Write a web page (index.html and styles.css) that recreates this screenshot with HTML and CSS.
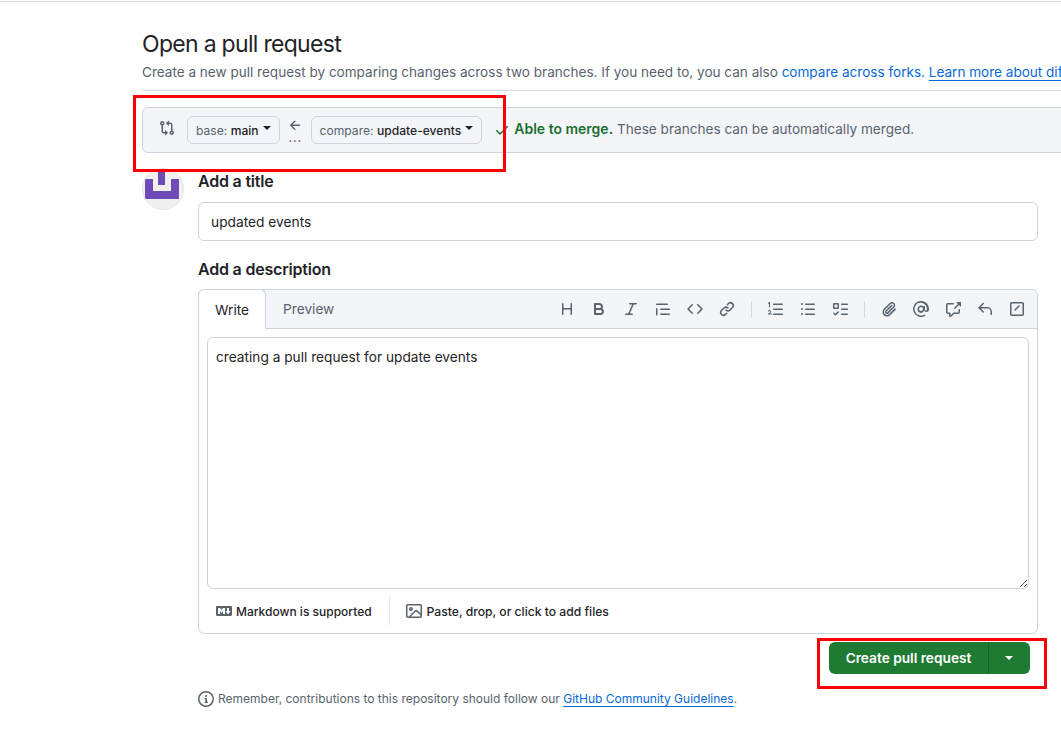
FILE: index.html
```html
<!DOCTYPE html>
<html lang="en">

<head>
    <meta charset="UTF-8">
    <meta name="viewport" content="width=device-width, initial-scale=1.0">
    <title>Open a pull request</title>
    <link rel="stylesheet" href="styles.css">
</head>

<body>
    <svg class="sprite" xmlns="http://www.w3.org/2000/svg">
        <symbol id="i-compare" viewBox="0 0 16 16"><path d="M9.573.677A.25.25 0 0 1 10 .854V2.5h1A2.5 2.5 0 0 1 13.5 5v5.628a2.251 2.251 0 1 1-1.5 0V5a1 1 0 0 0-1-1h-1v1.646a.25.25 0 0 1-.427.177L7.177 3.427a.25.25 0 0 1 0-.354ZM6 12v-1.646a.25.25 0 0 1 .427-.177l2.396 2.396a.25.25 0 0 1 0 .354l-2.396 2.396A.25.25 0 0 1 6 15.146V13.5H5A2.5 2.5 0 0 1 2.5 11V5.372a2.25 2.25 0 1 1 1.5 0V11a1 1 0 0 0 1 1ZM4 3.25a.75.75 0 1 0-1.5 0 .75.75 0 0 0 1.5 0ZM12.75 12a.75.75 0 1 0 0 1.5.75.75 0 0 0 0-1.5Z"/></symbol>
        <symbol id="i-arrow" viewBox="0 0 16 16"><path d="M7.78 12.53a.75.75 0 0 1-1.06 0L2.47 8.28a.75.75 0 0 1 0-1.06l4.25-4.25a.751.751 0 0 1 1.042.018.751.751 0 0 1 .018 1.042L4.81 7h7.44a.75.75 0 0 1 0 1.5H4.81l2.97 2.97a.75.75 0 0 1 0 1.06Z"/></symbol>
        <symbol id="i-check" viewBox="0 0 16 16"><path d="M13.78 4.22a.75.75 0 0 1 0 1.06l-7.25 7.25a.75.75 0 0 1-1.06 0L2.22 9.28a.751.751 0 0 1 .018-1.042.751.751 0 0 1 1.042-.018L6 10.94l6.72-6.72a.75.75 0 0 1 1.06 0Z"/></symbol>
        <symbol id="i-heading" viewBox="0 0 16 16"><path d="M3.75 2a.75.75 0 0 1 .75.75V7h7V2.75a.75.75 0 0 1 1.5 0v10.5a.75.75 0 0 1-1.5 0V8.5h-7v4.75a.75.75 0 0 1-1.5 0V2.75A.75.75 0 0 1 3.75 2Z"/></symbol>
        <symbol id="i-bold" viewBox="0 0 16 16"><path d="M4 2h4.5a3.501 3.501 0 0 1 2.852 5.53A3.499 3.499 0 0 1 9.5 14H4a1 1 0 0 1-1-1V3a1 1 0 0 1 1-1Zm1 7v3h4.5a1.5 1.5 0 0 0 0-3Zm3.5-2a1.5 1.5 0 0 0 0-3H5v3Z"/></symbol>
        <symbol id="i-italic" viewBox="0 0 16 16"><path d="M6 2.75A.75.75 0 0 1 6.75 2h6.5a.75.75 0 0 1 0 1.5h-2.505l-3.858 9H9.25a.75.75 0 0 1 0 1.5h-6.5a.75.75 0 0 1 0-1.5h2.505l3.858-9H6.75A.75.75 0 0 1 6 2.75Z"/></symbol>
        <symbol id="i-quote" viewBox="0 0 16 16"><path d="M1.75 2.5h10.5a.75.75 0 0 1 0 1.5H1.75a.75.75 0 0 1 0-1.5Zm4 5h8.5a.75.75 0 0 1 0 1.5h-8.5a.75.75 0 0 1 0-1.5Zm0 5h8.5a.75.75 0 0 1 0 1.5h-8.5a.75.75 0 0 1 0-1.5ZM2.5 7.75v6a.75.75 0 0 1-1.5 0v-6a.75.75 0 0 1 1.5 0Z"/></symbol>
        <symbol id="i-code" viewBox="0 0 16 16"><path d="m11.28 3.22 4.25 4.25a.75.75 0 0 1 0 1.06l-4.25 4.25a.749.749 0 0 1-1.275-.326.749.749 0 0 1 .215-.734L13.94 8l-3.72-3.72a.749.749 0 0 1 .326-1.275.749.749 0 0 1 .734.215Zm-6.56 0a.751.751 0 0 1 1.042.018.751.751 0 0 1 .018 1.042L2.06 8l3.72 3.72a.749.749 0 0 1-.326 1.275.749.749 0 0 1-.734-.215L.47 8.53a.75.75 0 0 1 0-1.06Z"/></symbol>
        <symbol id="i-link" viewBox="0 0 16 16"><path d="m7.775 3.275 1.25-1.25a3.5 3.5 0 1 1 4.95 4.95l-2.5 2.5a3.5 3.5 0 0 1-4.95 0 .751.751 0 0 1 .018-1.042.751.751 0 0 1 1.042-.018 1.998 1.998 0 0 0 2.83 0l2.5-2.5a2.002 2.002 0 0 0-2.83-2.83l-1.25 1.25a.751.751 0 0 1-1.042-.018.751.751 0 0 1-.018-1.042Zm-4.69 9.64a1.998 1.998 0 0 0 2.83 0l1.25-1.25a.751.751 0 0 1 1.042.018.751.751 0 0 1 .018 1.042l-1.25 1.25a3.5 3.5 0 1 1-4.95-4.95l2.5-2.5a3.5 3.5 0 0 1 4.95 0 .751.751 0 0 1-.018 1.042.751.751 0 0 1-1.042.018 1.998 1.998 0 0 0-2.83 0l-2.5 2.5a1.998 1.998 0 0 0 0 2.83Z"/></symbol>
        <symbol id="i-ordered" viewBox="0 0 16 16"><path d="M5 3.25a.75.75 0 0 1 .75-.75h8.5a.75.75 0 0 1 0 1.5h-8.5A.75.75 0 0 1 5 3.25Zm0 5a.75.75 0 0 1 .75-.75h8.5a.75.75 0 0 1 0 1.5h-8.5A.75.75 0 0 1 5 8.25Zm0 5a.75.75 0 0 1 .75-.75h8.5a.75.75 0 0 1 0 1.5h-8.5a.75.75 0 0 1-.75-.75ZM.924 10.32a.5.5 0 0 1-.851-.525c.097-.144.215-.273.35-.383.263-.213.646-.393 1.16-.393.52 0 .95.31 1.162.522.25.28.393.65.393 1.037 0 .44-.18.86-.504 1.161L1.8 12.5h1.7a.5.5 0 0 1 0 1H.5a.5.5 0 0 1-.3-.9l1.96-1.47a.6.6 0 0 0 .168-.42.6.6 0 0 0-.169-.42.6.6 0 0 0-.45-.19c-.26 0-.4.08-.5.16a1.1 1.1 0 0 0-.285.36ZM2 1.5V6a.5.5 0 0 1-1 0V2.4l-.5.3A.5.5 0 0 1 0 1.8l1.2-.75A.5.5 0 0 1 2 1.5Z"/></symbol>
        <symbol id="i-unordered" viewBox="0 0 16 16"><path d="M5.75 2.5h8.5a.75.75 0 0 1 0 1.5h-8.5a.75.75 0 0 1 0-1.5Zm0 5h8.5a.75.75 0 0 1 0 1.5h-8.5a.75.75 0 0 1 0-1.5Zm0 5h8.5a.75.75 0 0 1 0 1.5h-8.5a.75.75 0 0 1 0-1.5ZM2 14a1 1 0 1 1 0-2 1 1 0 0 1 0 2Zm1-6a1 1 0 1 1-2 0 1 1 0 0 1 2 0ZM2 4a1 1 0 1 1 0-2 1 1 0 0 1 0 2Z"/></symbol>
        <symbol id="i-tasklist" viewBox="0 0 16 16"><path d="M2 2h4a1 1 0 0 1 1 1v4a1 1 0 0 1-1 1H2a1 1 0 0 1-1-1V3a1 1 0 0 1 1-1Zm4.655 8.595a.75.75 0 0 1 0 1.06L4.03 14.28a.75.75 0 0 1-1.06 0l-1.5-1.5a.749.749 0 0 1 .326-1.275.749.749 0 0 1 .734.215l.97.97 2.095-2.095a.75.75 0 0 1 1.06 0ZM9.75 2.5h5.5a.75.75 0 0 1 0 1.5h-5.5a.75.75 0 0 1 0-1.5Zm0 5h5.5a.75.75 0 0 1 0 1.5h-5.5a.75.75 0 0 1 0-1.5Zm0 5h5.5a.75.75 0 0 1 0 1.5h-5.5a.75.75 0 0 1 0-1.5Zm-7.25-9v3h3v-3Z"/></symbol>
        <symbol id="i-clip" viewBox="0 0 16 16"><path d="M12.212 3.02a1.753 1.753 0 0 0-2.478.003l-5.83 5.83a3.007 3.007 0 0 0-.88 2.127c0 .795.315 1.551.88 2.116.567.567 1.333.89 2.126.89.79 0 1.548-.321 2.116-.89l5.48-5.48a.75.75 0 0 1 1.061 1.06l-5.48 5.48a4.492 4.492 0 0 1-3.177 1.33c-1.2 0-2.345-.487-3.187-1.33a4.483 4.483 0 0 1-1.32-3.177c0-1.195.475-2.341 1.32-3.186l5.83-5.83a3.25 3.25 0 0 1 5.553 2.297c0 .863-.343 1.691-.953 2.301L7.439 12.39c-.375.377-.884.59-1.416.593a1.998 1.998 0 0 1-1.412-.593 1.992 1.992 0 0 1 0-2.828l5.48-5.48a.751.751 0 0 1 1.042.018.751.751 0 0 1 .018 1.042l-5.48 5.48a.492.492 0 0 0 0 .707.499.499 0 0 0 .706 0l5.833-5.833a1.755 1.755 0 0 0 .002-2.48Z"/></symbol>
        <symbol id="i-mention" viewBox="0 0 16 16"><path d="M4.75 2.37a6.501 6.501 0 0 0 6.5 11.26.75.75 0 0 1 .75 1.298A8.001 8.001 0 0 1 3.999 1.072 8.002 8.002 0 0 1 16 8v.5a2.5 2.5 0 0 1-4.747 1.093A3.498 3.498 0 0 1 4.5 8a3.5 3.5 0 0 1 6.031-2.415.75.75 0 0 1 1.469.207V8.5a1 1 0 0 0 2 0V8a6.5 6.5 0 0 0-9.25-5.63ZM8 6a2 2 0 1 0 0 4 2 2 0 0 0 0-4Z"/></symbol>
        <symbol id="i-ref" viewBox="0 0 16 16"><path d="M2.75 3.5a.25.25 0 0 0-.25.25v7.5c0 .138.112.25.25.25h2a.75.75 0 0 1 .75.75v2.19l2.72-2.72a.749.749 0 0 1 .53-.22h4.5a.25.25 0 0 0 .25-.25v-2.5a.75.75 0 0 1 1.5 0v2.5A1.75 1.75 0 0 1 13.25 13H9.06l-2.573 2.573A1.458 1.458 0 0 1 4 14.543V13H2.75A1.75 1.75 0 0 1 1 11.25v-7.5C1 2.784 1.784 2 2.75 2h5.5a.75.75 0 0 1 0 1.5ZM16 1.25v4.146a.25.25 0 0 1-.427.177L14.03 4.03l-3.75 3.75a.749.749 0 0 1-1.275-.326.749.749 0 0 1 .215-.734l3.75-3.75-1.543-1.543A.25.25 0 0 1 11.604 1h4.146a.25.25 0 0 1 .25.25Z"/></symbol>
        <symbol id="i-reply" viewBox="0 0 16 16"><path d="M6.78 1.97a.75.75 0 0 1 0 1.06L3.81 6h6.44A4.75 4.75 0 0 1 15 10.75v2.5a.75.75 0 0 1-1.5 0v-2.5a3.25 3.25 0 0 0-3.25-3.25H3.81l2.97 2.97a.749.749 0 0 1-.326 1.275.749.749 0 0 1-.734-.215L1.47 7.28a.75.75 0 0 1 0-1.06l4.25-4.25a.75.75 0 0 1 1.06 0Z"/></symbol>
        <symbol id="i-slash" viewBox="0 0 16 16"><path d="M2.75 1h10.5c.966 0 1.75.784 1.75 1.75v10.5A1.75 1.75 0 0 1 13.25 15H2.75A1.75 1.75 0 0 1 1 13.25V2.75C1 1.784 1.784 1 2.75 1Zm0 1.5a.25.25 0 0 0-.25.25v10.5c0 .138.112.25.25.25h10.5a.25.25 0 0 0 .25-.25V2.75a.25.25 0 0 0-.25-.25Zm7.78 3.03-4 4a.75.75 0 0 1-1.06-1.06l4-4a.75.75 0 0 1 1.06 1.06Z"/></symbol>
        <symbol id="i-markdown" viewBox="0 0 16 16"><path d="M14.85 3c.63 0 1.15.52 1.14 1.15v7.7c0 .63-.51 1.15-1.15 1.15H1.15C.52 13 0 12.48 0 11.84V4.15C0 3.52.52 3 1.15 3ZM9 11V5H7L5.5 7 4 5H2v6h2V8l1.5 1.92L7 8v3Zm2.99.5L14.5 8H13V5h-2v3H9.5Z"/></symbol>
        <symbol id="i-image" viewBox="0 0 16 16"><path d="M16 13.25A1.75 1.75 0 0 1 14.25 15H1.75A1.75 1.75 0 0 1 0 13.25V2.75C0 1.784.784 1 1.75 1h12.5c.966 0 1.75.784 1.75 1.75ZM1.75 2.5a.25.25 0 0 0-.25.25v10.5c0 .138.112.25.25.25h.94l.03-.03 6.077-6.078a1.75 1.75 0 0 1 2.412-.06L14.5 10.31V2.75a.25.25 0 0 0-.25-.25Zm12.5 11a.25.25 0 0 0 .25-.25v-.917l-4.298-3.889a.25.25 0 0 0-.344.009L4.81 13.5ZM7 6a2 2 0 1 1-3.999.001A2 2 0 0 1 7 6ZM5.5 6a.5.5 0 1 0-.999.001A.5.5 0 0 0 5.5 6Z"/></symbol>
        <symbol id="i-info" viewBox="0 0 16 16"><path d="M0 8a8 8 0 1 1 16 0A8 8 0 0 1 0 8Zm8-6.5a6.5 6.5 0 1 0 0 13 6.5 6.5 0 0 0 0-13ZM6.5 7.75A.75.75 0 0 1 7.25 7h1a.75.75 0 0 1 .75.75v2.75h.25a.75.75 0 0 1 0 1.5h-2a.75.75 0 0 1 0-1.5h.25v-2h-.25a.75.75 0 0 1-.75-.75ZM8 6a1 1 0 1 1 0-2 1 1 0 0 1 0 2Z"/></symbol>
    </svg>

    <main class="page">
        <header class="subhead">
            <h1>Open a pull request</h1>
            <p>Create a new pull request by comparing changes across two branches. If you need to, you can also <a href="#">compare across forks.</a> <a href="#" class="underlined">Learn more about dif</a></p>
        </header>

        <div class="range">
            <svg class="icon range-icon"><use href="#i-compare"/></svg>
            <button class="ref-btn" type="button"><span>base: <b>main</b></span><span class="caret"></span></button>
            <div class="range-arrow">
                <svg class="icon"><use href="#i-arrow"/></svg>
                <span>...</span>
            </div>
            <button class="ref-btn" type="button"><span>compare: <b>update-events</b></span><span class="caret"></span></button>
            <div class="merge">
                <svg class="icon"><use href="#i-check"/></svg>
                <span><b>Able to merge.</b> These branches can be automatically merged.</span>
            </div>
        </div>

        <div class="compose">
            <div class="avatar">
                <svg viewBox="0 0 42 42" width="42" height="42">
                    <path fill="#6f4bb8" d="M3 11h8v12h18V11h8v20H3ZM16 4h7v13h-7Z"/>
                </svg>
            </div>

            <form class="pr-form">
                <label class="field-label">Add a title</label>
                <div class="title-input">updated events</div>

                <label class="field-label desc-label">Add a description</label>
                <div class="editor">
                    <div class="editor-head">
                        <div class="tab active">Write</div>
                        <div class="tab tab-preview">Preview</div>
                        <div class="toolbar">
                            <svg class="icon"><use href="#i-heading"/></svg>
                            <svg class="icon"><use href="#i-bold"/></svg>
                            <svg class="icon"><use href="#i-italic"/></svg>
                            <svg class="icon"><use href="#i-quote"/></svg>
                            <svg class="icon"><use href="#i-code"/></svg>
                            <svg class="icon"><use href="#i-link"/></svg>
                            <span class="tool-sep"></span>
                            <svg class="icon"><use href="#i-ordered"/></svg>
                            <svg class="icon"><use href="#i-unordered"/></svg>
                            <svg class="icon"><use href="#i-tasklist"/></svg>
                            <span class="tool-sep"></span>
                            <svg class="icon"><use href="#i-clip"/></svg>
                            <svg class="icon"><use href="#i-mention"/></svg>
                            <svg class="icon"><use href="#i-ref"/></svg>
                            <svg class="icon"><use href="#i-reply"/></svg>
                            <svg class="icon"><use href="#i-slash"/></svg>
                        </div>
                    </div>
                    <div class="editor-body">
                        <div class="textbox">
                            creating a pull request for update events
                            <svg class="resize" viewBox="0 0 10 10" width="10" height="10">
                                <path d="M9 2 2 9M9 6 6 9" stroke="#57606a" stroke-width="1" fill="none"/>
                            </svg>
                        </div>
                    </div>
                    <div class="editor-foot">
                        <span class="foot-item"><svg class="icon"><use href="#i-markdown"/></svg>Markdown is supported</span>
                        <span class="foot-sep"></span>
                        <span class="foot-item foot-paste"><svg class="icon"><use href="#i-image"/></svg>Paste, drop, or click to add files</span>
                    </div>
                </div>

                <div class="actions">
                    <div class="btn-group">
                        <button class="btn-create" type="button">Create pull request</button>
                        <button class="btn-more" type="button"><span class="caret"></span></button>
                    </div>
                </div>

                <p class="remember">
                    <svg class="icon"><use href="#i-info"/></svg>
                    <span>Remember, contributions to this repository should follow our <a href="#" class="underlined">GitHub Community Guidelines</a>.</span>
                </p>
            </form>
        </div>
    </main>

    <!-- red annotation boxes drawn on top of the screenshot -->
    <div class="mark mark-range"></div>
    <div class="mark mark-create"></div>
</body>

</html>
```
FILE: styles.css
```css
* {
    box-sizing: border-box;
}

html,
body {
    height: 100%;
}

body {
    margin: 0;
    padding-top: 1px;
    position: relative;
    overflow: hidden;
    background: #fff;
    color: #1f2328;
    font-family: "Inter", "Liberation Sans", sans-serif;
    font-size: 13px;
}

/* thin line under the browser chrome */
body::before {
    content: "";
    display: block;
    height: 1px;
    background: #d1d9e0;
}

.sprite {
    display: none;
}

.icon {
    width: 16px;
    height: 16px;
    fill: currentColor;
    flex: none;
}

a {
    color: #0969da;
    text-decoration: none;
}

a.underlined {
    text-decoration: underline;
    text-underline-offset: 3px;
}

.page {
    padding: 0 0 0 142px;
    width: 1100px;
}

/* heading */
.subhead {
    padding-top: 27px;
    padding-bottom: 8px;
    width: 919px;
    border-bottom: 1px solid #d1d9e0;
}

.subhead h1 {
    margin: 0;
    font-size: 23px;
    font-weight: 400;
    line-height: 30px;
    letter-spacing: -0.7px;
}

.subhead p {
    margin: 3px 0 0;
    font-size: 13.55px;
    line-height: 20px;
    color: #59636e;
    white-space: nowrap;
}

/* branch range */
.range {
    margin-top: 16px;
    height: 46px;
    padding-left: 16px;
    display: flex;
    align-items: center;
    background: #f3f5f9;
    border: 1px solid #ccd5de;
    border-radius: 6px;
    color: #59636e;
}

.range-icon {
    margin: 0 12px 4px 0;
}

.ref-btn {
    height: 28px;
    padding: 0 8px;
    display: flex;
    align-items: center;
    gap: 4px;
    font: inherit;
    font-size: 12.1px;
    color: #59636e;
    background: #f3f5f9;
    border: 1px solid #ccd5de;
    border-radius: 6px;
    white-space: nowrap;
}

.ref-btn b {
    font-weight: 500;
    color: #1f2328;
}

.caret {
    display: inline-block;
    border-top: 4px solid #1f2328;
    border-left: 4px solid transparent;
    border-right: 4px solid transparent;
}

.ref-btn .caret {
    margin-bottom: 4px;
}

.range-arrow {
    width: 31px;
    display: flex;
    flex-direction: column;
    align-items: center;
    line-height: 8px;
    font-size: 14px;
    letter-spacing: 0.5px;
}

.range-arrow .icon {
    width: 15px;
    height: 15px;
    margin-top: -2px;
}

.merge {
    margin-left: 12px;
    margin-bottom: 3px;
    display: flex;
    align-items: center;
    white-space: nowrap;
    font-size: 13.6px;
}

.merge .icon {
    margin-right: 4px;
    margin-top: 3px;
    color: #1a7030;
}

.merge b {
    font-size: 14px;
    font-weight: 600;
    color: #1a7030;
}

/* form */
.compose {
    margin-top: 15px;
    display: flex;
}

.avatar {
    width: 42px;
    height: 42px;
    flex: none;
    margin-right: 14px;
    border-radius: 50%;
    overflow: hidden;
    background: #f0f0f0;
    border: 1px solid #e4e6e9;
}

.avatar svg {
    display: block;
    margin: -1px;
}

.pr-form {
    width: 840px;
}

.field-label {
    display: block;
    font-size: 16px;
    font-weight: 600;
    line-height: 24px;
    letter-spacing: -0.2px;
    margin-top: 1px;
    margin-bottom: 9px;
}

.title-input {
    height: 39px;
    padding: 0 12px;
    display: flex;
    align-items: center;
    font-size: 13.75px;
    border: 1px solid #ccd5de;
    border-radius: 6px;
}

.desc-label {
    margin-top: 16px;
    margin-bottom: 8px;
}

.editor {
    height: 345px;
    border: 1px solid #ccd5de;
    border-radius: 6px;
    display: flex;
    flex-direction: column;
}

.editor-head {
    height: 39px;
    flex: none;
    display: flex;
    background: #f3f5f9;
    border-bottom: 1px solid #ccd5de;
    border-radius: 6px 6px 0 0;
}

.tab {
    padding: 0 16px;
    display: flex;
    align-items: center;
    font-size: 13.7px;
    color: #59636e;
}

.tab-preview {
    padding-left: 17px;
}

.tab.active {
    margin: -1px 0 -1px -1px;
    background: #fff;
    color: #1f2328;
    border: 1px solid #ccd5de;
    border-bottom: none;
    border-radius: 6px 6px 0 0;
    width: 68px;
    padding-top: 1px;
}

.toolbar {
    margin-left: auto;
    padding-right: 12px;
    display: flex;
    align-items: center;
    gap: 16px;
    color: #59636e;
}

.tool-sep {
    width: 1px;
    height: 16px;
    background: #d1d9e0;
}

.editor-body {
    padding: 8px 8px 0;
    flex: none;
}

.textbox {
    position: relative;
    height: 252px;
    padding: 9px 8px;
    font-size: 13.7px;
    line-height: 20px;
    border: 1px solid #ccd5de;
    border-radius: 6px;
}

.resize {
    position: absolute;
    right: 0;
    bottom: 0;
}

.editor-foot {
    flex: 1;
    padding: 0 8px 0 17px;
    display: flex;
    align-items: center;
    font-size: 12px;
    font-weight: 500;
    color: #1f2328;
}

.foot-item {
    display: flex;
    align-items: center;
    gap: 4px;
}

.foot-item .icon {
    color: #59636e;
}

.foot-paste {
    font-size: 12.15px;
    gap: 5px;
}

.foot-sep {
    width: 1px;
    height: 28px;
    margin: 0 16px 0 17px;
    background: #e4e7ea;
}

.actions {
    margin-top: 8px;
    padding-right: 8px;
    display: flex;
    justify-content: flex-end;
}

.btn-group {
    display: flex;
    height: 32px;
}

.btn-create,
.btn-more {
    border: none;
    background: #1f7a34;
    color: #fff;
    font: inherit;
    font-size: 13.7px;
    font-weight: 600;
}

.btn-create {
    width: 160px;
    padding: 0;
    border-radius: 6px 0 0 6px;
    border-right: 1px solid #186429;
}

.btn-more {
    width: 41px;
    padding: 0 2px 0 0;
    display: flex;
    align-items: center;
    justify-content: center;
    border-radius: 0 6px 6px 0;
}

.btn-more .caret {
    border-top-color: #fff;
}

.remember {
    margin: 16px 0 0;
    display: flex;
    align-items: center;
    font-size: 12px;
    line-height: 18px;
    color: #59636e;
    white-space: nowrap;
}

.remember .icon {
    margin-right: 4px;
}

/* annotations */
.mark {
    position: absolute;
    border: 3px solid #fb0007;
    pointer-events: none;
}

.mark-range {
    left: 133px;
    top: 95px;
    width: 373px;
    height: 77px;
}

.mark-create {
    left: 817px;
    top: 638px;
    width: 230px;
    height: 51px;
}
```
